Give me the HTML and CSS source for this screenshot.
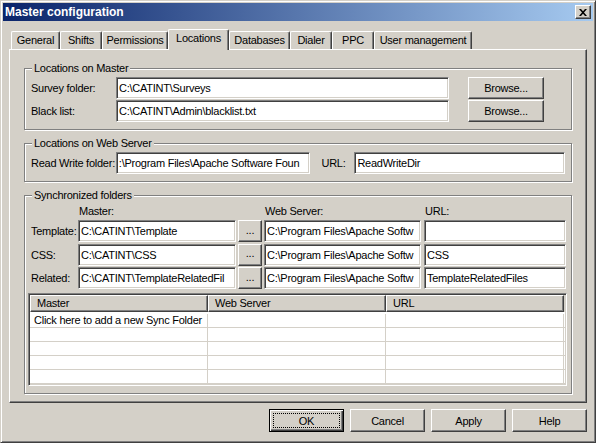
FILE: index.html
```html
<!DOCTYPE html>
<html>
<head>
<meta charset="utf-8">
<title>Master configuration</title>
<link rel="stylesheet" href="styles.css">
</head>
<body>
<div class="window">
  <div class="titlebar">
    <span class="title">Master configuration</span>
    <div class="close"><svg width="8" height="7" viewBox="0 0 8 7"><path d="M0 0h2l2 2.2L6 0h2L5 3.5 8 7H6L4 4.8 2 7H0l3-3.5z" fill="#000"/></svg></div>
  </div>
  <div class="content">
    <div class="tabs">
      <div class="tab t-general">General</div>
      <div class="tab t-shifts">Shifts</div>
      <div class="tab t-perm">Permissions</div>
      <div class="tab sel t-loc">Locations</div>
      <div class="tab t-db">Databases</div>
      <div class="tab t-dialer">Dialer</div>
      <div class="tab t-ppc">PPC</div>
      <div class="tab t-user">User management</div>
    </div>
    <div class="panel">
      <div class="group">
        <div class="legend">Locations on Master</div>
        <div class="rows">
          <div class="row">
            <span class="lbl lbl-wide">Survey folder:</span>
            <div class="input in-long">C:\CATINT\Surveys</div>
            <div class="btn browse">Browse...</div>
          </div>
          <div class="row">
            <span class="lbl lbl-wide">Black list:</span>
            <div class="input in-long">C:\CATINT\Admin\blacklist.txt</div>
            <div class="btn browse">Browse...</div>
          </div>
        </div>
      </div>
      <div class="group gap-top">
        <div class="legend">Locations on Web Server</div>
        <div class="rows">
          <div class="row">
            <span class="lbl lbl-wide">Read Write folder:</span>
            <div class="input in-rw">:\Program Files\Apache Software Foun</div>
            <span class="lbl lbl-url">URL:</span>
            <div class="input in-url">ReadWriteDir</div>
          </div>
        </div>
      </div>
      <div class="group gap-top">
        <div class="legend">Synchronized folders</div>
        <div class="sync-head">
          <span></span>
          <span class="head">Master:</span>
          <span></span>
          <span class="head">Web Server:</span>
          <span class="head">URL:</span>
        </div>
        <div class="sync">
          <span class="lbl">Template:</span>
          <div class="input in-master">C:\CATINT\Template</div>
          <div class="btn dots">...</div>
          <div class="input in-ws">C:\Program Files\Apache Softw</div>
          <div class="input in-surl"></div>

          <span class="lbl">CSS:</span>
          <div class="input in-master">C:\CATINT\CSS</div>
          <div class="btn dots">...</div>
          <div class="input in-ws">C:\Program Files\Apache Softw</div>
          <div class="input in-surl">CSS</div>

          <span class="lbl">Related:</span>
          <div class="input in-master">C:\CATINT\TemplateRelatedFil</div>
          <div class="btn dots">...</div>
          <div class="input in-ws">C:\Program Files\Apache Softw</div>
          <div class="input in-surl">TemplateRelatedFiles</div>
        </div>
        <div class="list">
          <div class="list-head">
            <div class="hcell">Master</div>
            <div class="hcell">Web Server</div>
            <div class="hcell">URL</div>
            <div class="hstub"></div>
          </div>
          <div class="list-body">
            <div class="lrow"><div class="lcell">Click here to add a new Sync Folder</div><div class="lcell"></div><div class="lcell"></div></div>
            <div class="lrow"><div class="lcell"></div><div class="lcell"></div><div class="lcell"></div></div>
            <div class="lrow"><div class="lcell"></div><div class="lcell"></div><div class="lcell"></div></div>
            <div class="lrow"><div class="lcell"></div><div class="lcell"></div><div class="lcell"></div></div>
            <div class="lrow"><div class="lcell"></div><div class="lcell"></div><div class="lcell"></div></div>
          </div>
        </div>
      </div>
    </div>
    <div class="actions">
      <div class="btn action default"><span class="focus">OK</span></div>
      <div class="btn action">Cancel</div>
      <div class="btn action">Apply</div>
      <div class="btn action">Help</div>
    </div>
  </div>
</div>
</body>
</html>
```
FILE: styles.css
```css
* { box-sizing: border-box; }

body {
  margin: 0;
  background: #D4D0C8;
  font-family: "Liberation Sans", Arial, sans-serif;
  font-size: 11px;
  letter-spacing: -0.25px;
  color: #000;
}

.window {
  width: 596px;
  height: 443px;
  background: #D4D0C8;
  border: 1px solid;
  border-color: #D4D0C8 #404040 #404040 #D4D0C8;
  box-shadow: inset 1px 1px #fff, inset -1px -1px #808080;
  padding: 2px;
}

.titlebar {
  height: 18px;
  background: linear-gradient(to right, #0A246A, #A6CAF0);
  display: flex;
  align-items: center;
  justify-content: space-between;
  padding: 0 2px;
}

.title {
  color: #fff;
  font-weight: bold;
  font-size: 12px;
  letter-spacing: 0;
  line-height: 18px;
}

.close {
  width: 16px;
  height: 14px;
  background: #D4D0C8;
  border: 1px solid;
  border-color: #fff #404040 #404040 #fff;
  box-shadow: inset -1px -1px #808080;
  display: flex;
  align-items: center;
  justify-content: center;
}

.close svg { display: block; }

.content { padding: 8px 6px 0; }

.tabs {
  display: flex;
  align-items: flex-end;
  height: 20px;
  padding-left: 2px;
}

.tab {
  height: 18px;
  border: 1px solid;
  border-bottom: none;
  border-color: #fff #404040 #404040 #fff;
  border-radius: 2px 2px 0 0;
  box-shadow: inset -1px 0 #808080;
  background: #D4D0C8;
  text-align: center;
  line-height: 16px;
  white-space: nowrap;
}

.tab.sel {
  height: 21px;
  margin-bottom: -1px;
  position: relative;
  z-index: 1;
}

.t-general { width: 49px; }
.t-shifts { width: 42px; }
.t-perm { width: 66px; }
.t-loc { width: 61px; }
.t-db { width: 61px; }
.t-dialer { width: 42px; }
.t-ppc { width: 42px; }
.t-user { width: 98px; }

.panel {
  height: 354px;
  border: 1px solid;
  border-color: #fff #404040 #404040 #fff;
  box-shadow: inset -1px -1px #808080;
  padding: 18px 0 0 14px;
}

.group {
  width: 548px;
  border: 1px solid #808080;
  box-shadow: inset 1px 1px #fff, 1px 1px #fff;
  padding: 0 6px 7px;
}

.gap-top { margin-top: 13px; }

.legend {
  width: fit-content;
  height: 13px;
  line-height: 13px;
  margin: -7px 0 2px 1px;
  padding: 0 2px;
  background: #D4D0C8;
  white-space: nowrap;
}

.rows {
  display: flex;
  flex-direction: column;
  gap: 1px;
}

.row {
  display: flex;
  align-items: center;
  height: 22px;
}

.lbl { white-space: nowrap; }
.lbl-wide { width: 85px; }
.lbl-url { width: 33px; margin-left: 11px; }

.input {
  height: 22px;
  background: #fff;
  border: 1px solid;
  border-color: #808080 #fff #fff #808080;
  box-shadow: inset 1px 1px #404040, inset -1px -1px #D4D0C8;
  padding: 0 2px;
  line-height: 20px;
  white-space: nowrap;
  overflow: hidden;
}

.in-long { width: 333px; }
.in-rw { width: 195px; }
.in-url { width: 211px; }
.in-master { width: 158px; }
.in-ws { width: 157px; }
.in-surl { width: 142px; }

.btn {
  background: #D4D0C8;
  border: 1px solid;
  border-color: #fff #404040 #404040 #fff;
  box-shadow: inset -1px -1px #808080;
  display: flex;
  align-items: center;
  justify-content: center;
  white-space: nowrap;
}

.browse {
  width: 76px;
  height: 22px;
  margin-left: 19px;
}

.dots {
  width: 24px;
  height: 22px;
  padding-bottom: 3px;
}

.sync-head,
.sync {
  display: grid;
  grid-template-columns: 47px 160px 26px 160px 142px;
}

.sync-head {
  height: 13px;
  line-height: 13px;
  margin: 3px 0 2px;
}

.head { padding-left: 1px; white-space: nowrap; }

.sync {
  row-gap: 1.5px;
  align-items: center;
}

.list {
  width: 539px;
  height: 93px;
  margin: 4px 0 0 -3px;
  background: #fff;
  border: 1px solid;
  border-color: #808080 #fff #fff #808080;
  box-shadow: inset 1px 1px #404040, inset -1px -1px #D4D0C8;
  padding: 1px;
  overflow: hidden;
}

.list-head {
  display: flex;
  height: 17px;
  background: #D4D0C8;
}

.hcell {
  width: 178px;
  border: 1px solid;
  border-color: #fff #404040 #404040 #fff;
  box-shadow: inset -1px -1px #808080;
  line-height: 15px;
  padding-left: 6px;
  white-space: nowrap;
}

.hstub { flex: 1; background: #D4D0C8; }

.list-body { padding-top: 2px; }

.lrow {
  display: flex;
  height: 14px;
  border-bottom: 1px solid #D4D0C8;
}

.lcell {
  width: 178px;
  border-right: 1px solid #D4D0C8;
  line-height: 13px;
  padding-left: 4px;
  white-space: nowrap;
  overflow: hidden;
}

.actions {
  display: flex;
  justify-content: flex-end;
  gap: 6px;
  margin-top: 6px;
}

.action {
  width: 75px;
  height: 23px;
}

.action.default {
  border: 1px solid #000;
  box-shadow: inset 1px 1px #fff, inset -1px -1px #404040, inset -2px -2px #808080;
  padding: 3px;
}

.focus {
  flex: 1;
  align-self: stretch;
  border: 1px dotted #000;
  display: flex;
  align-items: center;
  justify-content: center;
}
```
